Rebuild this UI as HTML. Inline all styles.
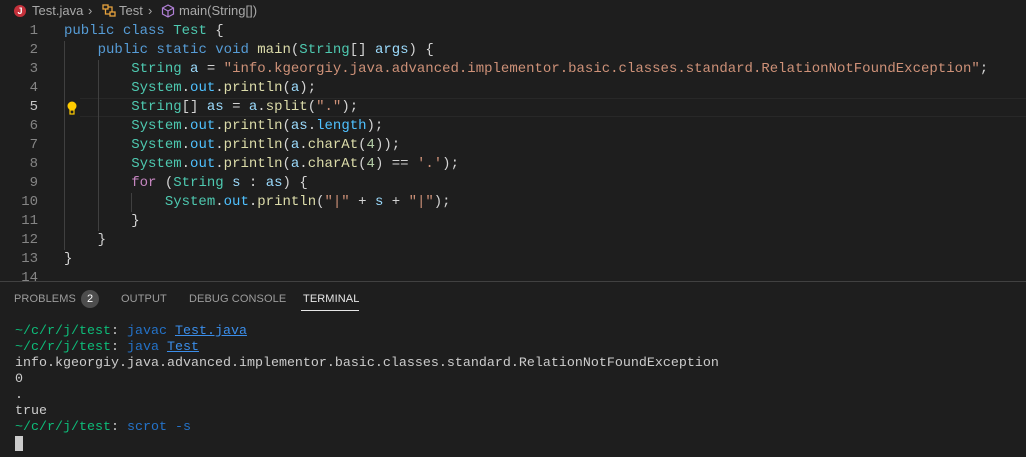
<!DOCTYPE html>
<html><head><meta charset="utf-8"><style>
body{margin:0;width:1026px;height:456px;background:#1e1e1e;overflow:hidden;position:relative;font-family:"Liberation Sans",sans-serif}
.bc{position:absolute;top:0;left:0;height:22px;width:1026px;font-size:13px;color:#a9a9a9;line-height:22px}
.code{position:absolute;left:0;top:22px;font-family:"Liberation Mono",monospace;font-size:14px;}
.ln{position:absolute;left:0;width:38px;text-align:right;color:#858585;height:19px;line-height:19px}
.tx{position:absolute;left:64px;white-space:pre;color:#d4d4d4;height:19px;line-height:19px}
.k{color:#569cd6}.t{color:#4ec9b0}.s{color:#ce9178}.f{color:#dcdcaa}.v{color:#9cdcfe}.o{color:#4fc1ff}.n{color:#b5cea8}.p{color:#c586c0}
.g{position:absolute;width:1px;background:#404040}
.panel{position:absolute;left:0;top:281px;width:1026px;height:175px;border-top:1px solid #414141;background:#1e1e1e}
.tab{position:absolute;top:11px;font-size:11px;color:#9d9d9d;letter-spacing:0.1px}
.term{position:absolute;left:15px;top:42px;font-family:"Liberation Mono",monospace;font-size:13.33px;line-height:16px;color:#cccccc;white-space:pre}
.gr{color:#0dbc79}.bl{color:#2472c8}.lk{color:#3b8eea;text-decoration:underline}
</style></head><body>
<div class="bc">
<span style="position:absolute;left:14px;top:5px;width:12px;height:12px;border-radius:50%;background:#c4313b;color:#fff;font-size:9px;line-height:12px;text-align:center;font-weight:bold">J</span>
<span style="position:absolute;left:32px">Test.java</span>
<span style="position:absolute;left:88px">›</span>
<svg style="position:absolute;left:102px;top:4px" width="14" height="14" viewBox="0 0 14 14" fill="none" stroke="#e8a33d" stroke-width="1.3"><rect x="1" y="1" width="5" height="4"/><rect x="8" y="8" width="5" height="4"/><path d="M3.5 5v5h4.5M6 3h4v5"/></svg>
<span style="position:absolute;left:119px">Test</span>
<span style="position:absolute;left:148px">›</span>
<svg style="position:absolute;left:161px;top:4px" width="14" height="14" viewBox="0 0 14 14" fill="none" stroke="#b180d7" stroke-width="1.2"><path d="M7 1l5.5 3v6L7 13 1.5 10V4z M1.5 4L7 7l5.5-3 M7 7v6"/></svg>
<span style="position:absolute;left:179px">main(String[])</span>
</div>
<div style="position:absolute;left:80px;top:98px;width:946px;height:17px;border-top:1px solid #282828;border-bottom:1px solid #282828"></div>
<div class="g" style="left:64px;top:41px;height:209px"></div>
<div class="g" style="left:98px;top:60px;height:171px"></div>
<div class="g" style="left:131px;top:193px;height:19px"></div>
<svg style="position:absolute;left:66px;top:101px" width="12" height="14" viewBox="0 0 12 14"><circle cx="6" cy="5" r="4.5" fill="#ffcc00"/><rect x="4" y="9" width="4" height="4" fill="none" stroke="#ffcc00" stroke-width="1.2"/></svg>
<div class="code">
<div class="ln" style="top:0">1</div><div class="tx" style="top:0"><span class="k">public</span> <span class="k">class</span> <span class="t">Test</span> {</div>
<div class="ln" style="top:19px">2</div><div class="tx" style="top:19px">    <span class="k">public</span> <span class="k">static</span> <span class="k">void</span> <span class="f">main</span>(<span class="t">String</span>[] <span class="v">args</span>) {</div>
<div class="ln" style="top:38px">3</div><div class="tx" style="top:38px">        <span class="t">String</span> <span class="v">a</span> = <span class="s">"info.kgeorgiy.java.advanced.implementor.basic.classes.standard.RelationNotFoundException"</span>;</div>
<div class="ln" style="top:57px">4</div><div class="tx" style="top:57px">        <span class="t">System</span>.<span class="o">out</span>.<span class="f">println</span>(<span class="v">a</span>);</div>
<div class="ln" style="top:76px;color:#c6c6c6">5</div><div class="tx" style="top:76px">        <span class="t">String</span>[] <span class="v">as</span> = <span class="v">a</span>.<span class="f">split</span>(<span class="s">"."</span>);</div>
<div class="ln" style="top:95px">6</div><div class="tx" style="top:95px">        <span class="t">System</span>.<span class="o">out</span>.<span class="f">println</span>(<span class="v">as</span>.<span class="o">length</span>);</div>
<div class="ln" style="top:114px">7</div><div class="tx" style="top:114px">        <span class="t">System</span>.<span class="o">out</span>.<span class="f">println</span>(<span class="v">a</span>.<span class="f">charAt</span>(<span class="n">4</span>));</div>
<div class="ln" style="top:133px">8</div><div class="tx" style="top:133px">        <span class="t">System</span>.<span class="o">out</span>.<span class="f">println</span>(<span class="v">a</span>.<span class="f">charAt</span>(<span class="n">4</span>) == <span class="s">'.'</span>);</div>
<div class="ln" style="top:152px">9</div><div class="tx" style="top:152px">        <span class="p">for</span> (<span class="t">String</span> <span class="v">s</span> : <span class="v">as</span>) {</div>
<div class="ln" style="top:171px">10</div><div class="tx" style="top:171px">            <span class="t">System</span>.<span class="o">out</span>.<span class="f">println</span>(<span class="s">"|"</span> + <span class="v">s</span> + <span class="s">"|"</span>);</div>
<div class="ln" style="top:190px">11</div><div class="tx" style="top:190px">        }</div>
<div class="ln" style="top:209px">12</div><div class="tx" style="top:209px">    }</div>
<div class="ln" style="top:228px">13</div><div class="tx" style="top:228px">}</div>
<div class="ln" style="top:247px">14</div>
</div>
<div class="panel">
<span class="tab" style="left:14px">PROBLEMS</span>
<span style="position:absolute;left:81px;top:8px;width:18px;height:18px;border-radius:9px;background:#4d4d4d;color:#fff;font-size:11px;line-height:18px;text-align:center">2</span>
<span class="tab" style="left:121px">OUTPUT</span>
<span class="tab" style="left:189px">DEBUG CONSOLE</span>
<span class="tab" style="left:303px;color:#e7e7e7">TERMINAL</span>
<div style="position:absolute;left:301px;top:28px;width:58px;height:1px;background:#e7e7e7"></div>
<div class="term"><span class="gr">~/c/r/j/test</span>: <span class="bl">javac</span> <span class="lk">Test.java</span>
<span class="gr">~/c/r/j/test</span>: <span class="bl">java</span> <span class="lk">Test</span>
info.kgeorgiy.java.advanced.implementor.basic.classes.standard.RelationNotFoundException
0
.
true
<span class="gr">~/c/r/j/test</span>: <span class="bl">scrot</span> <span class="bl">-s</span>
<span style="background:#cccccc"> </span></div>
</div>
</body></html>
